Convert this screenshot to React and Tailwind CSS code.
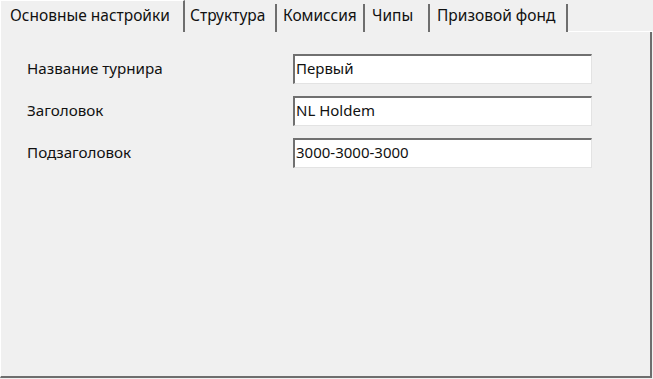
export default function App() {
  const font = { fontFamily: '"Noto Sans", "Open Sans", sans-serif' };
  const tabs = [
    { label: "Структура", w: 92, pl: 5 },
    { label: "Комиссия", w: 88, pl: 6 },
    { label: "Чипы", w: 65, pl: 7 },
    { label: "Призовой фонд", w: 138, pl: 7 },
  ];
  const rows = [
    ["Название турнира", "Первый"],
    ["Заголовок", "NL Holdem"],
    ["Подзаголовок", "3000-3000-3000"],
  ];
  return (
    <div className="w-[653px] h-[379px] bg-[#f0f0f0] flex flex-col text-[#111111] overflow-hidden" style={font}>
      <div className="flex h-[32px] shrink-0">
        <div className="w-[185px] h-[32px] border-l border-l-white border-t border-t-white border-r-2 border-r-[#6e6e6e] bg-[#f0f0f0] pl-[9px] pt-[2px] text-[15.5px] leading-[24px]">
          Основные настройки
        </div>
        {tabs.map((t) => (
          <div
            key={t.label}
            className="h-[28px] mt-[4px] border-r-2 border-r-[#6e6e6e] text-[15.5px] leading-[23px] bg-[#f0f0f0]"
            style={{ width: t.w, paddingLeft: t.pl }}
          >
            {t.label}
          </div>
        ))}
        <div className="flex-1 border-b border-b-white" />
      </div>
      <div className="flex-1 border-r-2 border-r-[#6e6e6e] border-b-2 border-b-[#6e6e6e] border-l border-l-white mr-[1px] mb-[1px] pt-[22px] pl-[26px] flex flex-col gap-[12px]">
        {rows.map(([l, v]) => (
          <div key={l} className="flex items-center h-[30px]">
            <div className="w-[266px] text-[15.2px] leading-[20px] -mt-[2px]">{l}</div>
            <div className="w-[299px] h-[30px] bg-white border-t-2 border-l-2 border-t-[#707070] border-l-[#707070] border-r border-b border-r-[#e3e3e3] border-b-[#e3e3e3] pl-[1px] text-[15px] leading-[25px]">
              {v}
            </div>
          </div>
        ))}
      </div>
    </div>
  );
}
